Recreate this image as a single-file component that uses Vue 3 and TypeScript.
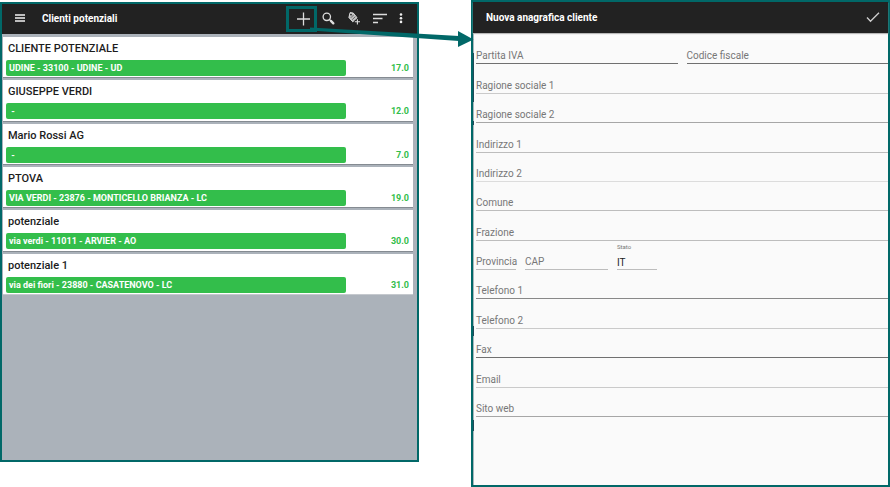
<script setup lang="ts">
interface Customer {
  name: string
  address: string
  score: string
}

interface Field {
  id: string
  label: string
  size?: string
  value?: string
}

interface FieldRow {
  tone: string
  fields: Field[]
}

const customers: Customer[] = [
  { name: 'CLIENTE POTENZIALE', address: 'UDINE - 33100 - UDINE - UD', score: '17.0' },
  { name: 'GIUSEPPE VERDI', address: ' -', score: '12.0' },
  { name: 'Mario Rossi AG', address: ' -', score: '7.0' },
  { name: 'PTOVA', address: 'VIA VERDI - 23876 - MONTICELLO BRIANZA - LC', score: '19.0' },
  { name: 'potenziale', address: 'via verdi - 11011 - ARVIER - AO', score: '30.0' },
  { name: 'potenziale 1', address: 'via dei fiori - 23880 - CASATENOVO - LC', score: '31.0' },
]

const rows: FieldRow[] = [
  { tone: 'dark', fields: [{ id: 'piva', label: 'Partita IVA' }, { id: 'cf', label: 'Codice fiscale' }] },
  { tone: 'soft', fields: [{ id: 'rs1', label: 'Ragione sociale 1' }] },
  { tone: 'medium', fields: [{ id: 'rs2', label: 'Ragione sociale 2' }] },
  { tone: 'light', fields: [{ id: 'ind1', label: 'Indirizzo 1' }] },
  { tone: 'faint', fields: [{ id: 'ind2', label: 'Indirizzo 2' }] },
  { tone: 'light', fields: [{ id: 'comune', label: 'Comune' }] },
  { tone: 'light', fields: [{ id: 'frazione', label: 'Frazione' }] },
  {
    tone: 'light',
    fields: [
      { id: 'prov', label: 'Provincia', size: 'short' },
      { id: 'cap', label: 'CAP', size: 'mid' },
      { id: 'stato', label: 'Stato', size: 'short', value: 'IT' },
    ],
  },
  { tone: 'strong', fields: [{ id: 'tel1', label: 'Telefono 1' }] },
  { tone: 'soft', fields: [{ id: 'tel2', label: 'Telefono 2' }] },
  { tone: 'dark', fields: [{ id: 'fax', label: 'Fax' }] },
  { tone: 'soft', fields: [{ id: 'email', label: 'Email' }] },
  { tone: 'medium', fields: [{ id: 'web', label: 'Sito web' }] },
]
</script>

<template>
  <main class="stage">
    <section class="panel list-panel">
      <header class="bar list-bar">
        <button class="icon-btn" type="button" aria-label="Menu">
          <svg width="12" height="12" viewBox="0 0 12 12">
            <path d="M1 2h10M1 5h10M1 8h10" stroke="#f2f2f2" stroke-width="1.3" />
          </svg>
        </button>
        <h1 class="title">Clienti potenziali</h1>
        <div class="tools">
          <button class="icon-btn add" type="button" aria-label="Aggiungi">
            <svg width="15" height="15" viewBox="0 0 15 15">
              <path d="M7.5 .5v13M1 7h13" stroke="#dcdcdc" stroke-width="1.3" />
            </svg>
          </button>
          <button class="icon-btn" type="button" aria-label="Cerca">
            <svg width="14" height="14" viewBox="0 0 14 14" fill="none">
              <circle cx="5.8" cy="4.8" r="3.7" stroke="#dedede" stroke-width="1.3" />
              <path d="M8.5 7.5l1.3 1.3" stroke="#dedede" stroke-width="1.2" />
              <path d="M9.9 8.9l2.4 2.4" stroke="#dedede" stroke-width="2.4" stroke-linecap="round" />
            </svg>
          </button>
          <button class="icon-btn" type="button" aria-label="Aggiungi etichetta">
            <svg width="14" height="14" viewBox="0 0 14 14" fill="none">
              <path d="M3.1 .6L6.3 1.1 10 5.7 5.8 9.8 1.9 5.5z" fill="#bdbdbd" stroke="#dddddd" stroke-width="1" stroke-linejoin="round" />
              <circle cx="4" cy="2.6" r=".9" fill="#222" />
              <path d="M3.8 5.8l3-3M5.2 7.7l3.2-3.1" stroke="#444" stroke-width=".7" />
              <path d="M10.4 7v5.6M7.6 9.8h5.6" stroke="#222" stroke-width="3" />
              <path d="M10.4 7.2v5.2M7.8 9.8H13" stroke="#dddddd" stroke-width="1.1" />
            </svg>
          </button>
          <button class="icon-btn" type="button" aria-label="Ordina">
            <svg width="14" height="12" viewBox="0 0 14 12">
              <path d="M0 1.5h14M0 5.5h9.5M0 9.5h5" stroke="#dddddd" stroke-width="1.3" />
            </svg>
          </button>
          <button class="icon-btn" type="button" aria-label="Altro">
            <svg width="4" height="12" viewBox="0 0 4 12" fill="#f0f0f0">
              <circle cx="2" cy="1.5" r="1.3" />
              <circle cx="2" cy="5.2" r="1.3" />
              <circle cx="2" cy="8.9" r="1.3" />
            </svg>
          </button>
        </div>
      </header>

      <ul class="cards">
        <li v-for="c in customers" :key="c.name" class="card">
          <h2 class="name">{{ c.name }}</h2>
          <div class="info">
            <span class="address">{{ c.address }}</span>
            <span class="score">{{ c.score }}</span>
          </div>
        </li>
      </ul>
    </section>

    <section class="panel form-panel">
      <header class="bar form-bar">
        <h1 class="title">Nuova anagrafica cliente</h1>
        <button class="icon-btn" type="submit" form="customer" aria-label="Conferma">
          <svg width="14" height="12" viewBox="0 0 14 12" fill="none">
            <path d="M1 5.5l3.5 3.7L13 .8" stroke="#d0d0d0" stroke-width="1.3" />
          </svg>
        </button>
      </header>

      <form id="customer" class="form" @submit.prevent>
        <div v-for="row in rows" :key="row.fields[0].id" class="row" :class="row.tone">
          <div
            v-for="f in row.fields"
            :key="f.id"
            class="field"
            :class="[f.size, { filled: f.value }]"
          >
            <label :for="f.id">{{ f.label }}</label>
            <input :id="f.id" type="text" :value="f.value" />
          </div>
        </div>
      </form>
    </section>

    <svg class="arrow" width="164" height="24" viewBox="0 0 164 24" fill="#016868">
      <path d="M0 2.6L149 11v5L0 5.4z" />
      <path d="M148 6l15.5 8.5L148 22z" />
    </svg>
  </main>
</template>

<style>
body {
  margin: 0;
  background: #fff;
}
</style>

<style scoped>
.stage {
  position: relative;
  display: grid;
  grid-template-columns: 1fr 1fr;
  column-gap: 52px;
  min-height: 100vh;
  font-family: Roboto, "Liberation Sans", sans-serif;
}

.panel {
  box-sizing: border-box;
  min-width: 0;
  border: 2px solid #016868;
}

.list-panel {
  margin: 2px 0 25px;
  background: #abb2ba;
}

.form-panel {
  background: linear-gradient(
      #a9b8bc 0 51px,
      #204a58 51px 100px,
      #a9b8bc 100px 119px,
      #204a58 119px 123px,
      #a9b8bc 123px 324px,
      #204a58 324px 334px,
      #a9b8bc 334px 418px,
      #204a58 418px 429px,
      #a9b8bc 429px
    ) left top / 1px 100% no-repeat #fafafa;
}

.bar {
  display: flex;
  align-items: center;
  box-sizing: border-box;
  background: #222;
}

.list-bar {
  height: 30px;
  padding: 0 14px 0 12px;
}

.form-bar {
  height: 31px;
  padding: 0 8px 0 13px;
  justify-content: space-between;
  box-shadow: 0 1px 1px #b8b8b8;
}

.title {
  margin: 0;
  font-size: 10px;
  line-height: 14px;
  font-weight: 700;
  color: #fff;
  white-space: nowrap;
}

.list-bar .title {
  margin-left: 16px;
}

.tools {
  display: flex;
  align-items: center;
  gap: 12px;
  margin-left: auto;
}

.icon-btn {
  display: flex;
  align-items: center;
  justify-content: center;
  box-sizing: border-box;
  padding: 0;
  border: 0;
  background: none;
}

.add {
  width: 31px;
  height: 26px;
  margin-right: -8px;
  padding-left: 4px;
  border: 3px solid #016868;
}

.cards {
  display: grid;
  grid-auto-rows: 1fr;
  gap: 2px;
  min-height: 258px;
  margin: 0;
  padding: 3px 4px 0 1px;
  list-style: none;
}

.card {
  box-sizing: border-box;
  padding: 4px 4px 1px 3px;
  background: #fff;
  border-bottom: 1px solid #858b92;
}

.card:last-child {
  border-bottom-color: #c5c9ce;
}

.name {
  margin: 0 2px 4px;
  font-size: 11px;
  line-height: 15px;
  font-weight: 500;
  color: #1c1c1c;
}

.info {
  display: flex;
  align-items: center;
  gap: 20px;
}

.address {
  flex: 1;
  box-sizing: border-box;
  padding: 0 3px;
  border-radius: 2px;
  background: #33be4b;
  color: #fff;
  font-size: 9px;
  line-height: 16px;
  font-weight: 700;
  white-space: pre;
}

.score {
  width: 43px;
  text-align: right;
  font-size: 9px;
  line-height: 16px;
  font-weight: 700;
  color: #33be4b;
}

.form {
  display: grid;
  grid-auto-rows: 1fr;
  min-height: 382px;
  padding: 2px 0 0 3px;
}

.row {
  --line: #bdbdbd;
  display: flex;
  gap: 9px;
}

.row.dark { --line: #707070; }
.row.strong { --line: #888; }
.row.medium { --line: #a6a6a6; }
.row.soft { --line: #cacaca; }
.row.faint { --line: #dcdcdc; }

.field {
  flex: 1;
  display: grid;
  min-width: 0;
  border-bottom: 1px solid var(--line);
}

.field.short { flex: 0 0 40px; }
.field.mid { flex: 0 0 83px; }

.field label,
.field input {
  grid-area: 1 / 1;
  min-width: 0;
}

.field label {
  align-self: end;
  padding-bottom: 1px;
  font-size: 10px;
  line-height: 12px;
  color: #777;
  white-space: nowrap;
  pointer-events: none;
}

.field.filled label {
  align-self: start;
  font-size: 6px;
  line-height: 12px;
}

.field input {
  align-self: end;
  width: 100%;
  box-sizing: border-box;
  padding: 0;
  border: 0;
  outline: 0;
  background: none;
  font-family: inherit;
  font-size: 10px;
  line-height: 12px;
  color: #222;
}

.arrow {
  position: absolute;
  top: 25px;
  left: calc(50% - 135px);
}
</style>
